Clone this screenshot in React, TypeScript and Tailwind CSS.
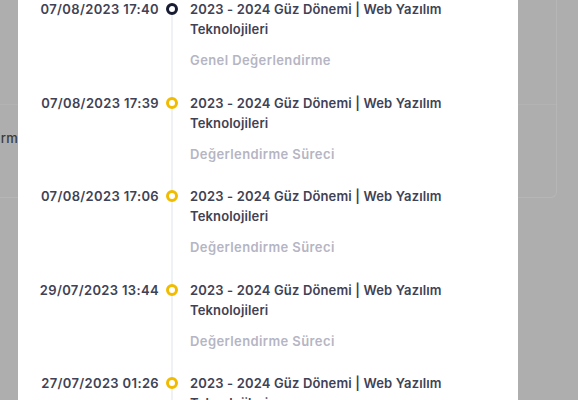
import React from "react";

const rows = [
  { date: "07/08/2023 17:40", sub: "Genel Değerlendirme", dark: true },
  { date: "07/08/2023 17:39", sub: "Değerlendirme Süreci" },
  { date: "07/08/2023 17:06", sub: "Değerlendirme Süreci" },
  { date: "29/07/2023 13:44", sub: "Değerlendirme Süreci" },
  { date: "27/07/2023 01:26", sub: "Değerlendirme Süreci" },
];

export default function App() {
  return (
    <div
      className="relative w-[578px] h-[400px] overflow-hidden bg-[#aeaeae]"
      style={{ fontFamily: "Inter, 'Noto Sans', sans-serif" }}
    >
      {/* background page (dimmed) */}
      <div className="pr-[21px]">
        <div className="border-r border-b border-[#b6b6b6] rounded-br-[6px]">
          <div className="h-[105px] border-b border-[#b3b3b3]" />
          <div className="h-[92px] flex items-start pt-[23px]">
            <div className="w-[26px] flex justify-end">
              <span className="whitespace-nowrap text-[13px] leading-[20px] font-medium text-[#3a3a3a] tracking-[0.3px]">
                Değerlendirme
              </span>
            </div>
          </div>
        </div>
      </div>

      {/* modal */}
      <div className="absolute left-[18px] top-0 w-[500px] h-[400px] bg-white">
        <div className="flex flex-col mt-[-1px]">
          {rows.map((r, i) => (
            <div key={i} className="flex h-[93.5px]">
              <div className="w-[141px] text-right text-[13px] leading-[20px] font-semibold text-[#3f4254] tracking-[0.35px]">
                {r.date}
              </div>
              <div className="relative w-[25px] flex justify-center">
                <div className="absolute left-[11.5px] top-[14px] h-[94px] w-[2px] bg-[#eff2f5]" />
                <div
                  className={
                    "relative mt-[4px] w-[12px] h-[12px] rounded-full border-[3px] bg-white " +
                    (r.dark ? "border-[#181c32]" : "border-[#f1bc00]")
                  }
                />
              </div>
              <div className="pl-[6px] w-[266px]">
                <div className="text-[13px] leading-[20px] font-semibold text-[#3f4254] tracking-[0.15px]">
                  2023 - 2024 Güz Dönemi | Web Yazılım Teknolojileri
                </div>
                <div className="mt-[11px] text-[13px] leading-[20px] font-semibold text-[#b5b5c3] tracking-[0.4px]">
                  {r.sub}
                </div>
              </div>
            </div>
          ))}
        </div>
      </div>
    </div>
  );
}
